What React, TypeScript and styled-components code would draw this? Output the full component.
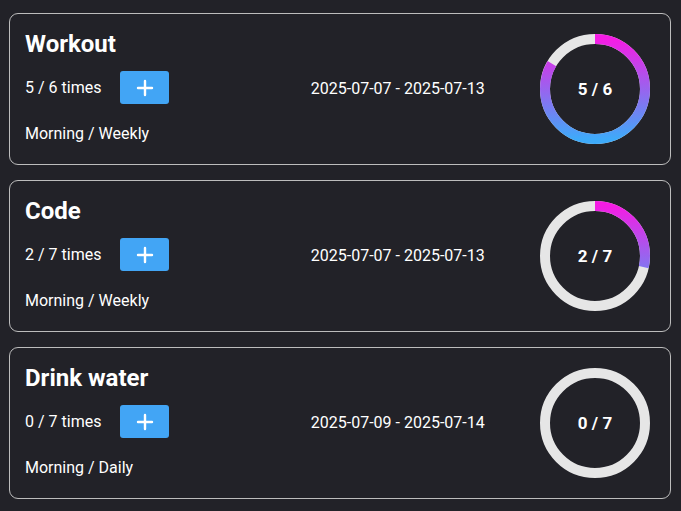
import styled, { createGlobalStyle } from "styled-components";

const GlobalStyle = createGlobalStyle`
  html, body {
    margin: 0;
    padding: 0;
    background-color: #222228;
    font-family: Roboto, "Liberation Sans", sans-serif;
    color: #ffffff;
  }
`;

type Habit = {
  name: string;
  done: number;
  goal: number;
  from: string;
  to: string;
  schedule: string;
};

const habits: Habit[] = [
  { name: "Workout", done: 5, goal: 6, from: "2025-07-07", to: "2025-07-13", schedule: "Morning / Weekly" },
  { name: "Code", done: 2, goal: 7, from: "2025-07-07", to: "2025-07-13", schedule: "Morning / Weekly" },
  { name: "Drink water", done: 0, goal: 7, from: "2025-07-09", to: "2025-07-14", schedule: "Morning / Daily" },
];

const RADIUS = 50;
const CIRC = 2 * Math.PI * RADIUS;

function ProgressRing({ done, goal, id }: { done: number; goal: number; id: string }) {
  const pct = goal > 0 ? done / goal : 0;
  return (
    <RingWrap>
      <svg width="110" height="110" viewBox="0 0 110 110">
        <defs>
          {/* gradient lives in the rotated space of the arc: local x=105 is the top */}
          <linearGradient id={id} gradientUnits="userSpaceOnUse" x1="105" y1="55" x2="5" y2="55">
            <stop offset="0" stopColor="#f51ce4" />
            <stop offset="1" stopColor="#3eaaf9" />
          </linearGradient>
        </defs>
        <circle cx="55" cy="55" r={RADIUS} fill="none" stroke="#e6e6e6" strokeWidth="10" />
        {pct > 0 && (
          <circle
            cx="55"
            cy="55"
            r={RADIUS}
            fill="none"
            stroke={`url(#${id})`}
            strokeWidth="10"
            strokeDasharray={`${CIRC * pct} ${CIRC}`}
            transform="rotate(-90 55 55)"
          />
        )}
      </svg>
      <RingLabel>
        {done} / {goal}
      </RingLabel>
    </RingWrap>
  );
}

export default function App() {
  return (
    <>
      <GlobalStyle />
      <List>
        {habits.map((h, i) => (
          <Card key={h.name}>
            <Info>
              <Title>{h.name}</Title>
              <CountRow>
                <Count>
                  {h.done} / {h.goal} times
                </Count>
                <AddButton type="button" aria-label="add">
                  <svg width="18" height="18" viewBox="0 0 18 18">
                    <path d="M9 2v14M2 9h14" stroke="#fff" strokeWidth="2.4" strokeLinecap="round" />
                  </svg>
                </AddButton>
              </CountRow>
              <Schedule>{h.schedule}</Schedule>
            </Info>
            <Dates>
              {h.from} - {h.to}
            </Dates>
            <ProgressRing done={h.done} goal={h.goal} id={`ring-grad-${i}`} />
          </Card>
        ))}
      </List>
    </>
  );
}

const List = styled.div`
  display: flex;
  flex-direction: column;
  gap: 15px;
  padding: 13px 10px 12px 9px;
`;

const Card = styled.div`
  display: flex;
  align-items: center;
  gap: 24px;
  box-sizing: border-box;
  width: 662px;
  height: 152px;
  padding: 16px 20px 16px 15px;
  border: 1px solid #bdbdbd;
  border-radius: 9px;
`;

const Info = styled.div`
  flex: 1;
  display: flex;
  flex-direction: column;
  align-self: stretch;
`;

const Title = styled.h2`
  margin: 0;
  font-size: 24px;
  line-height: 28px;
  font-weight: 700;
`;

const CountRow = styled.div`
  display: flex;
  align-items: center;
  margin-top: 13px;
  height: 33px;
`;

const Count = styled.span`
  font-size: 16px;
  line-height: 19px;
`;

const AddButton = styled.button`
  display: flex;
  align-items: center;
  justify-content: center;
  margin-left: 19px;
  width: 49px;
  height: 33px;
  padding: 0;
  border: none;
  border-radius: 3px;
  background-color: #42a5f5;
  cursor: pointer;
`;

const Schedule = styled.div`
  margin-top: 20px;
  font-size: 16px;
  line-height: 19px;
`;

const Dates = styled.div`
  flex: 1;
  text-align: center;
  font-size: 16px;
  line-height: 19px;
  margin-bottom: 2px;
  margin-right: 2px;
`;

const RingWrap = styled.div`
  position: relative;
  width: 110px;
  height: 110px;
  flex-shrink: 0;

  svg {
    display: block;
  }
`;

const RingLabel = styled.div`
  position: absolute;
  inset: 0;
  display: flex;
  align-items: center;
  justify-content: center;
  font-size: 17px;
  font-weight: 700;
`;
